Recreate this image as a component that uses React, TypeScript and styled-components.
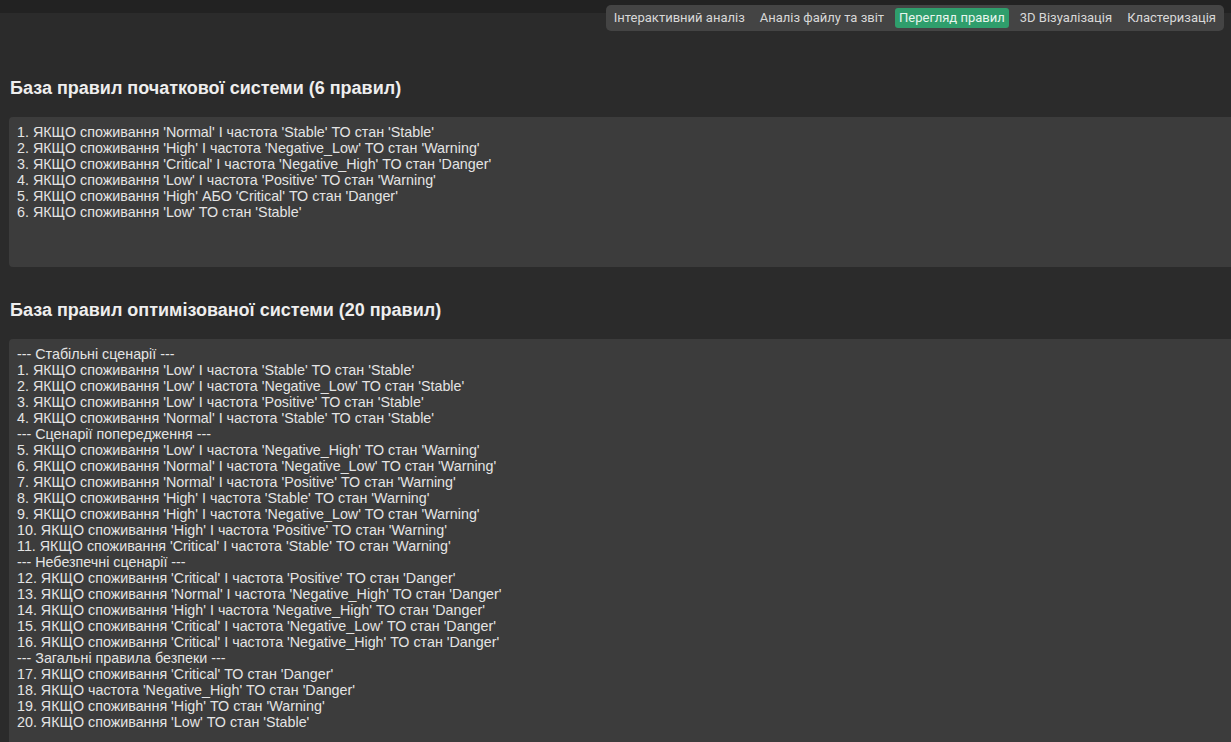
import React from 'react';
import styled, { createGlobalStyle } from 'styled-components';

const GlobalStyle = createGlobalStyle`
  html, body {
    margin: 0;
    padding: 0;
    background: #2b2b2b;
    overflow: hidden;
  }
  body {
    font-family: "Liberation Sans", Arial, sans-serif;
    color: #e6e6e6;
  }
`;

const tabs = [
  'Інтерактивний аналіз',
  'Аналіз файлу та звіт',
  'Перегляд правил',
  '3D Візуалізація',
  'Кластеризація',
];

const initialRules = [
  "1. ЯКЩО споживання 'Normal' І частота 'Stable' ТО стан 'Stable'",
  "2. ЯКЩО споживання 'High' І частота 'Negative_Low' ТО стан 'Warning'",
  "3. ЯКЩО споживання 'Critical' І частота 'Negative_High' ТО стан 'Danger'",
  "4. ЯКЩО споживання 'Low' І частота 'Positive' ТО стан 'Warning'",
  "5. ЯКЩО споживання 'High' АБО 'Critical' ТО стан 'Danger'",
  "6. ЯКЩО споживання 'Low' ТО стан 'Stable'",
];

const optimizedRules = [
  '--- Стабільні сценарії ---',
  "1. ЯКЩО споживання 'Low' І частота 'Stable' ТО стан 'Stable'",
  "2. ЯКЩО споживання 'Low' І частота 'Negative_Low' ТО стан 'Stable'",
  "3. ЯКЩО споживання 'Low' І частота 'Positive' ТО стан 'Stable'",
  "4. ЯКЩО споживання 'Normal' І частота 'Stable' ТО стан 'Stable'",
  '--- Сценарії попередження ---',
  "5. ЯКЩО споживання 'Low' І частота 'Negative_High' ТО стан 'Warning'",
  "6. ЯКЩО споживання 'Normal' І частота 'Negative_Low' ТО стан 'Warning'",
  "7. ЯКЩО споживання 'Normal' І частота 'Positive' ТО стан 'Warning'",
  "8. ЯКЩО споживання 'High' І частота 'Stable' ТО стан 'Warning'",
  "9. ЯКЩО споживання 'High' І частота 'Negative_Low' ТО стан 'Warning'",
  "10. ЯКЩО споживання 'High' І частота 'Positive' ТО стан 'Warning'",
  "11. ЯКЩО споживання 'Critical' І частота 'Stable' ТО стан 'Warning'",
  '--- Небезпечні сценарії ---',
  "12. ЯКЩО споживання 'Critical' І частота 'Positive' ТО стан 'Danger'",
  "13. ЯКЩО споживання 'Normal' І частота 'Negative_High' ТО стан 'Danger'",
  "14. ЯКЩО споживання 'High' І частота 'Negative_High' ТО стан 'Danger'",
  "15. ЯКЩО споживання 'Critical' І частота 'Negative_Low' ТО стан 'Danger'",
  "16. ЯКЩО споживання 'Critical' І частота 'Negative_High' ТО стан 'Danger'",
  '--- Загальні правила безпеки ---',
  "17. ЯКЩО споживання 'Critical' ТО стан 'Danger'",
  "18. ЯКЩО частота 'Negative_High' ТО стан 'Danger'",
  "19. ЯКЩО споживання 'High' ТО стан 'Warning'",
  "20. ЯКЩО споживання 'Low' ТО стан 'Stable'",
];

export default function App() {
  return (
    <>
      <GlobalStyle />
      <Header>
        <TabBar>
          {tabs.map((t) => (
            <Tab key={t} active={t === 'Перегляд правил'}>
              {t}
            </Tab>
          ))}
        </TabBar>
      </Header>

      <Content>
        <Section>
          <Title>База правил початкової системи (6 правил)</Title>
          <RulesBox height={150}>
            {initialRules.map((r) => (
              <Line key={r}>{r}</Line>
            ))}
          </RulesBox>
        </Section>

        <Section>
          <Title>База правил оптимізованої системи (20 правил)</Title>
          <RulesBox height={412}>
            {optimizedRules.map((r) => (
              <Line key={r}>{r}</Line>
            ))}
          </RulesBox>
        </Section>
      </Content>
    </>
  );
}

const Header = styled.header`
  display: flex;
  justify-content: flex-end;
  padding: 5px 7px 0 0;
  background: linear-gradient(#222222 0, #222222 13px, transparent 13px);
`;

const TabBar = styled.nav`
  display: flex;
  align-items: center;
  gap: 7px;
  padding: 3px 4px;
  background: #444444;
  border-radius: 5px;
`;

const Tab = styled.div<{ active?: boolean }>`
  font-family: Roboto, "Liberation Sans", sans-serif;
  font-size: 13px;
  line-height: 20px;
  padding: 0 4px;
  border-radius: 3px;
  color: ${(p) => (p.active ? '#e8f5ee' : '#d8d8d8')};
  background: ${(p) => (p.active ? '#2f9e6c' : 'transparent')};
  white-space: nowrap;
`;

const Content = styled.main`
  padding: 47px 0 0 9px;
`;

const Section = styled.section`
  margin-bottom: 33px;
`;

const Title = styled.h2`
  margin: 0 0 18px 1px;
  font-size: 18px;
  line-height: 21px;
  font-weight: bold;
  color: #eeeeee;
`;

const RulesBox = styled.div<{ height: number }>`
  box-sizing: border-box;
  height: ${(p) => p.height}px;
  margin-right: -20px;
  padding: 7px 8px;
  background: #3c3c3c;
  border-radius: 4px;
  font-size: 14.3px;
  line-height: 16px;
  color: #e4e4e4;
`;

const Line = styled.div`
  white-space: pre;
`;
